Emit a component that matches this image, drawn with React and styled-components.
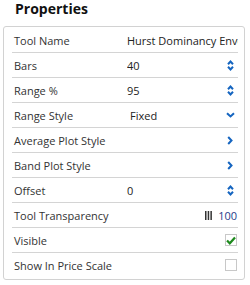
import React from "react";
import styled, { createGlobalStyle } from "styled-components";

const GlobalStyle = createGlobalStyle`
  body {
    margin: 0;
    background: #ffffff;
    font-family: "Open Sans", "Liberation Sans", sans-serif;
  }
`;

const Wrapper = styled.div`
  width: 250px;
  height: 285px;
  overflow: hidden;
`;

const Title = styled.h2`
  margin: 0 0 8px 0;
  padding-left: 15px;
  font-size: 14px;
  line-height: 18px;
  font-weight: 700;
  color: #111111;
`;

const Panel = styled.div`
  margin-left: 3px;
  width: 242px;
  box-sizing: border-box;
  border: 1px solid #d2d2d2;
  border-radius: 3px;
  padding: 1px 6px 1px 8px;
`;

const Row = styled.div`
  display: grid;
  grid-template-columns: 115px 1fr auto;
  align-items: center;
  height: 25px;
  box-sizing: border-box;
  border-bottom: 1px solid ${(p) => (p.$last ? "transparent" : "#d4d4d4")};
  font-size: 11px;
  color: #333333;
`;

const Label = styled.span`
  padding-left: 2px;
  white-space: nowrap;
`;

const Value = styled.span`
  grid-column: ${(p) => (p.$wide ? "2 / 4" : "auto")};
  white-space: nowrap;
  overflow: hidden;
  padding-left: ${(p) => (p.$select ? "3px" : "0")};
  color: #222222;
`;

const Control = styled.span`
  display: flex;
  align-items: center;
  justify-content: flex-end;
  gap: 6px;
  padding-right: ${(p) => p.$pad || "4px"};
`;

const Percent = styled.span`
  color: #1f3d8a;
  font-size: 11px;
`;

const Check = styled.span`
  width: 12px;
  height: 12px;
  box-sizing: border-box;
  border: 1px solid #c8c8c8;
  display: flex;
  align-items: center;
  justify-content: center;
`;

const blue = "#1565c0";

const Spinner = () => (
  <svg width="7" height="11" viewBox="0 0 7 11">
    <path d="M1 4.2 L3.5 1.5 L6 4.2" fill="none" stroke={blue} strokeWidth="2" />
    <path d="M1 6.8 L3.5 9.5 L6 6.8" fill="none" stroke={blue} strokeWidth="2" />
  </svg>
);

const ChevronRight = () => (
  <svg width="6" height="9" viewBox="0 0 6 9">
    <path d="M1.2 1 L4.5 4.5 L1.2 8" fill="none" stroke={blue} strokeWidth="2" />
  </svg>
);

const ChevronDown = () => (
  <svg width="9" height="6" viewBox="0 0 9 6">
    <path d="M1 1.2 L4.5 4.5 L8 1.2" fill="none" stroke={blue} strokeWidth="2" />
  </svg>
);

const Bars = () => (
  <svg width="7" height="9" viewBox="0 0 7 9">
    <rect x="0" y="0" width="1.5" height="9" fill="#333" />
    <rect x="2.7" y="0" width="1.5" height="9" fill="#333" />
    <rect x="5.4" y="0" width="1.5" height="9" fill="#333" />
  </svg>
);

const Tick = () => (
  <svg width="10" height="9" viewBox="0 0 10 9">
    <path d="M1 4.5 L3.8 7.3 L9 1.5" fill="none" stroke="#1e8a1e" strokeWidth="2.2" />
  </svg>
);

export default function App() {
  return (
    <Wrapper>
      <GlobalStyle />
      <Title>Properties</Title>
      <Panel>
        <Row>
          <Label>Tool Name</Label>
          <Value $wide>Hurst Dominancy Envelope</Value>
        </Row>
        <Row>
          <Label>Bars</Label>
          <Value>40</Value>
          <Control><Spinner /></Control>
        </Row>
        <Row>
          <Label>Range %</Label>
          <Value>95</Value>
          <Control><Spinner /></Control>
        </Row>
        <Row>
          <Label>Range Style</Label>
          <Value $select>Fixed</Value>
          <Control $pad="3px"><ChevronDown /></Control>
        </Row>
        <Row>
          <Label>Average Plot Style</Label>
          <Value />
          <Control $pad="5px"><ChevronRight /></Control>
        </Row>
        <Row>
          <Label>Band Plot Style</Label>
          <Value />
          <Control $pad="5px"><ChevronRight /></Control>
        </Row>
        <Row>
          <Label>Offset</Label>
          <Value>0</Value>
          <Control><Spinner /></Control>
        </Row>
        <Row>
          <Label>Tool Transparency</Label>
          <Value />
          <Control $pad="1px"><Bars /><Percent>100</Percent></Control>
        </Row>
        <Row>
          <Label>Visible</Label>
          <Value />
          <Control $pad="1px"><Check><Tick /></Check></Control>
        </Row>
        <Row $last>
          <Label>Show In Price Scale</Label>
          <Value />
          <Control $pad="1px"><Check /></Control>
        </Row>
      </Panel>
    </Wrapper>
  );
}
